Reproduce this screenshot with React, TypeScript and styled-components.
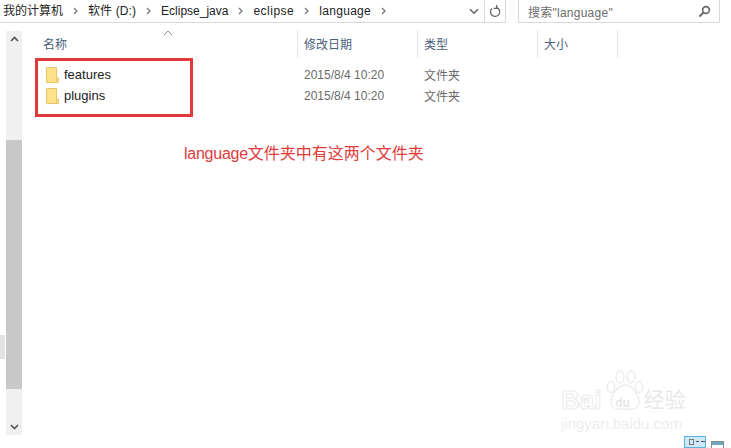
import React from "react";
import styled, { createGlobalStyle } from "styled-components";

const Global = createGlobalStyle`
  html, body { margin: 0; padding: 0; background: #fff; }
  #root { width: 731px; height: 448px; overflow: hidden; }
`;
const CN = `"Liberation Sans", "Noto Sans CJK SC", sans-serif`;

const Page = styled.div`
  position: relative; width: 731px; height: 448px; overflow: hidden; background: #fff;
  display: flex; flex-direction: column; font-family: ${CN}; font-size: 12px;
`;
const TopBar = styled.div`display: flex; height: 23px; padding-right: 11px; gap: 12px;`;
const Address = styled.div`
  width: 506px; box-sizing: border-box; height: 23px; display: flex; align-items: center;
  border-bottom: 1px solid #d9d9d9; border-right: 1px solid #d9d9d9; padding-left: 3px; color: #222;
`;
const Crumb = styled.span<{ $sp?: number }>`
  white-space: nowrap; font-size: 12px; line-height: 20px; letter-spacing: ${(p) => p.$sp ?? 0}px;
`;
const Sep = styled.svg`width: 5px; height: 8px; margin: 0 10px; flex: none;`;
const Spacer = styled.div`flex: 1;`;
const AddrBtn = styled.div`
  width: 20px; height: 22px; flex: none; display: flex; align-items: center; justify-content: center;
  & + & { border-left: 1px solid #d9d9d9; }
`;
const Search = styled.div`
  flex: 1; box-sizing: border-box; height: 23px; display: flex; align-items: center; justify-content: space-between;
  border: 1px solid #d9d9d9; border-top: none; padding: 0 8px 0 9px; color: #6d6d6d; font-size: 12px; letter-spacing: 0.25px;
`;
const Main = styled.div`flex: 1; display: flex; min-height: 0;`;
const Gutter = styled.div`width: 6px; flex: none; padding-top: 312px;`;
const GutterMark = styled.div`height: 24px; background: #e3e3e3; width: 5px;`;
const Scrollbar = styled.div`
  width: 16px; height: 404px; margin-top: 8px; flex: none; background: #f0f0f0;
  display: flex; flex-direction: column; align-items: center;
`;
const ScrollBtn = styled.div`height: 109px; width: 100%; display: flex; justify-content: center; padding-top: 5px; box-sizing: border-box;`;
const ScrollBtnBottom = styled(ScrollBtn)`height: 46px; align-items: flex-end; padding: 0 0 5px;`;
const Thumb = styled.div`width: 100%; height: 249px; background: #c8c8c8;`;
const Content = styled.div`flex: 1; position: relative;`;
const Header = styled.div`display: flex; height: 28px; margin-top: 7px; padding-left: 13px; color: #4c607a; font-size: 12px;`;
const Col = styled.div<{ $w: number }>`
  width: ${(p) => p.$w}px; box-sizing: border-box; flex: none; padding-left: 6px; line-height: 30px;
  border-right: 1px solid #e4e4e4;
`;
const NameCol = styled(Col)`padding-left: 8px; position: relative;`;
const SortArrow = styled.svg`position: absolute; left: 128px; top: 0; width: 10px; height: 6px;`;
const List = styled.div`padding-top: 6px;`;
const Row = styled.div`display: flex; height: 21px; align-items: center; color: #6a6a6a;`;
const NameCell = styled.div`
  width: 275px; box-sizing: border-box; padding-left: 24px; display: flex; align-items: center; gap: 5px;
  color: #222; font-size: 13px;
`;
const DateCell = styled.div`width: 120px; box-sizing: border-box; padding-left: 7px; white-space: nowrap;`;
const TypeCell = styled.div`padding-left: 7px; white-space: nowrap;`;
const RedBox = styled.div`
  position: absolute; left: 13px; top: 35px; width: 158px; height: 59px; box-sizing: border-box;
  border: 3px solid #e23a3a; pointer-events: none;
`;
const Note = styled.div`color: #e03c3c; font-size: 16px; line-height: 20px; margin: 38px 0 0 162px; white-space: nowrap;`;
const NoteLatin = styled.span`letter-spacing: -0.25px;`;
const Watermark = styled.div`
  position: absolute; left: 561px; top: 388px; width: 132px; color: #fff;
`;
const WmTop = styled.div`display: flex; align-items: center; height: 24px;`;
const WmBai = styled.span`
  font-size: 26px; line-height: 24px; font-weight: 700; -webkit-text-stroke: 1px #ebebeb; color: #fff;
`;
const WmDu = styled.span`
  position: relative; font-size: 12px; font-weight: 700; line-height: 14px; width: 42px; padding-top: 6px; text-align: center; color: #e6e6e6;
`;
const WmCn = styled.span`font-size: 21px; line-height: 24px; color: #e8e8e8;`;
const WmBottom = styled.div`font-size: 15px; line-height: 16px; margin-top: 4px; color: #eeeeee; white-space: nowrap;`;
const Paw = styled.svg`position: absolute; left: 45px; top: -18px; width: 38px; height: 41px;`;
const ViewIcons = styled.div`position: absolute; left: 684px; top: 436px; display: flex; gap: 5px; align-items: flex-start;`;
const ViewOn = styled.div`
  width: 22px; height: 12px; box-sizing: border-box; background: #cce8fb; border: 1px solid #5dafe0; padding: 2px 0 0 4px;
  display: flex; gap: 2px; align-items: flex-start;
`;
const ViewOff = styled.div`
  width: 13px; height: 7px; margin-top: 5px; box-sizing: border-box; border: 1px solid #8a8a8a; border-bottom: none;
  background: linear-gradient(#6fa6c4 0 3px, #fff 3px);
`;
const Tick = styled.span`width: 4px; height: 1px; background: #555; margin-top: 2px;`;
const Box = styled.span`width: 3px; height: 4px; border: 1px solid #777;`;

const Chevron = () => (
  <Sep viewBox="0 0 5 8"><path d="M1 1l3 3-3 3" fill="none" stroke="#777" strokeWidth="1.3" /></Sep>
);
const FolderSvg = styled.svg`flex: none; width: 13px; height: 16px;`;
const Folder = () => (
  <FolderSvg viewBox="0 0 13 16">
    <path d="M.5.5h10v10.500h2v4.500H.5z" fill="#fde28a" stroke="#e8c76c" />
    <path d="M10.500 11v4.500" stroke="#e8c76c" />
  </FolderSvg>
);

const rows = ["features", "plugins"];

export default function App() {
  return (
    <Page>
      <Global />
      <TopBar>
        <Address>
          <Crumb>我的计算机</Crumb><Chevron />
          <Crumb $sp={0.1}>软件 (D:)</Crumb><Chevron />
          <Crumb>Eclipse_java</Crumb><Chevron />
          <Crumb $sp={0.5}>eclipse</Crumb><Chevron />
          <Crumb $sp={0.3}>language</Crumb><Chevron />
          <Spacer />
          <AddrBtn>
            <svg width="10" height="7" viewBox="0 0 10 7"><path d="M1 1.2l4 4 4-4" fill="none" stroke="#666" strokeWidth="1.6" /></svg>
          </AddrBtn>
          <AddrBtn>
            <svg width="12" height="13" viewBox="0 0 12 13"><path d="M3 3.4A4.6 4.6 0 1 0 8 2.6M7.6 0v3.4H4.6" fill="none" stroke="#666" strokeWidth="1.3" /></svg>
          </AddrBtn>
        </Address>
        <Search>
          <span>搜索"language"</span>
          <svg width="13" height="13" viewBox="0 0 13 13"><circle cx="8" cy="5" r="3.4" fill="none" stroke="#666" strokeWidth="1.6" /><path d="M5.4 7.6L1.5 11.5" stroke="#666" strokeWidth="2" /></svg>
        </Search>
      </TopBar>
      <Main>
        <Gutter><GutterMark /></Gutter>
        <Scrollbar>
          <ScrollBtn>
            <svg width="9" height="6" viewBox="0 0 9 6"><path d="M1 5l3.5-3.5L8 5" fill="none" stroke="#555" strokeWidth="1.7" /></svg>
          </ScrollBtn>
          <Thumb />
          <ScrollBtnBottom>
            <svg width="9" height="6" viewBox="0 0 9 6"><path d="M1 1l3.5 3.5L8 1" fill="none" stroke="#555" strokeWidth="1.7" /></svg>
          </ScrollBtnBottom>
        </Scrollbar>
        <Content>
          <Header>
            <NameCol $w={263}>
              名称
              <SortArrow viewBox="0 0 10 6"><path d="M1 5l4-4 4 4" fill="none" stroke="#888" /></SortArrow>
            </NameCol>
            <Col $w={120}>修改日期</Col>
            <Col $w={120}>类型</Col>
            <Col $w={80}>大小</Col>
          </Header>
          <List>
            {rows.map((name) => (
              <Row key={name}>
                <NameCell><Folder />{name}</NameCell>
                <DateCell>2015/8/4 10:20</DateCell>
                <TypeCell>文件夹</TypeCell>
              </Row>
            ))}
          </List>
          <RedBox />
          <Note><NoteLatin>language</NoteLatin>文件夹中有这两个文件夹</Note>
        </Content>
      </Main>
      <Watermark>
        <Paw viewBox="0 0 38 41">
          <g fill="#fff" stroke="#ebebeb" strokeWidth="1.3">
            <ellipse cx="5" cy="17" rx="3.8" ry="5.5" /><ellipse cx="14" cy="7" rx="4" ry="6" />
            <ellipse cx="25" cy="7" rx="4" ry="6" /><ellipse cx="33" cy="17" rx="3.8" ry="5.5" />
            <path d="M19 15c7 0 14 10 14 17 0 7-8 8-14 7-6 1-14 0-14-7 0-7 7-17 14-17z" />
          </g>
        </Paw>
        <WmTop>
          <WmBai>Bai</WmBai>
          <WmDu>du</WmDu>
          <WmCn>经验</WmCn>
        </WmTop>
        <WmBottom>jingyan.baidu.com</WmBottom>
      </Watermark>
      <ViewIcons>
        <ViewOn><Box /><Tick /><Tick /></ViewOn>
        <ViewOff />
      </ViewIcons>
    </Page>
  );
}
